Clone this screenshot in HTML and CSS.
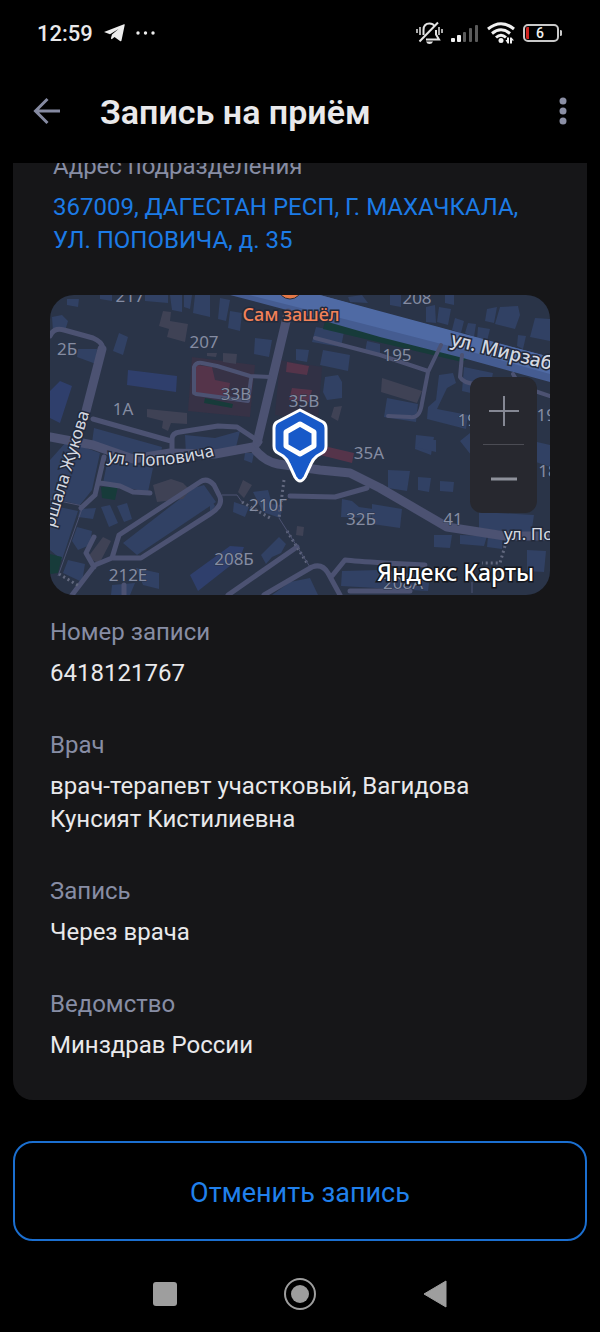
FILE: index.html
```html
<!DOCTYPE html>
<html lang="ru">
<head>
<meta charset="utf-8">
<meta name="viewport" content="width=device-width, initial-scale=1">
<title>Запись на приём</title>
<link rel="stylesheet" href="styles.css">
</head>
<body>
<div class="screen">
  <div class="status">
    <div class="status-left">
      <span class="clock">12:59</span>
      <svg width="21" height="18" viewBox="0 0 21 18" aria-hidden="true"><path d="M0 8 20 0.3Q21 0 20.7 1L17.5 16.5Q17.2 17.8 16 17L10.5 13 8 15Q7 15.500 7 14L8 10.500 14.500 5 6 10.300Z" fill="#eee"/></svg>
      <svg width="20" height="4" viewBox="0 0 20 4" aria-hidden="true"><g fill="#eee"><circle cx="2" cy="2" r="1.700"/><circle cx="9.500" cy="2" r="1.700"/><circle cx="17" cy="2" r="1.700"/></g></svg>
    </div>
    <div class="status-right">
      <svg width="27" height="24" viewBox="0 0 27 24" aria-hidden="true"><g fill="none" stroke="#e4e4e4" stroke-width="2"><path d="M7.500 14V9Q7.500 2.500 13.500 2.500 17 2.500 18.500 5M20 9V13.500L23 18.500H10"/><path d="M3.500 20.500 22 1.500"/><path d="M1 8V12M4 6V14M23 6V14M26 8V12" stroke-width="1.500"/></g><path d="M10 20.500H17Q16 23 13.500 23T10 20.500Z" fill="#e4e4e4"/></svg>
      <svg width="28" height="19" viewBox="0 0 28 19" aria-hidden="true"><g fill="#f0f0f0"><rect y="14" width="4" height="4" rx="1"/><rect x="6" y="11" width="4" height="7" rx="1"/></g><g fill="#5b5b5b"><rect x="12" y="8" width="3" height="10" rx="1"/><rect x="18" y="4" width="3" height="14" rx="1"/><rect x="24" y="1" width="3" height="17" rx="1"/></g></svg>
      <svg width="28" height="22" viewBox="0 0 28 22" aria-hidden="true"><g fill="none" stroke="#f0f0f0" stroke-width="3"><path d="M1 7Q14-3.500 27 7"/><path d="M5 11.500Q14 4 23 11.500"/><path d="M9 15.500Q14 11 19 15.500"/></g><circle cx="14" cy="18.500" r="2.500" fill="#f0f0f0"/><path d="M18.500 18H20V15.500H22V21.500H20.500ZM27 18.500H25V21.500H23V15.500H24.500Z" fill="#f0f0f0"/></svg>
      <svg class="battery" width="40" height="20" viewBox="0 0 40 20" role="img" aria-label="6"><rect x="1" y="2" width="34" height="16" rx="4" fill="none" stroke="#c9c9c9" stroke-width="2"/><path d="M6 4V16H4Q3 16 3 14V6Q3 4 4 4Z" fill="#cf2420"/><path d="M37 7Q39 7 39 8V12Q39 13 37 13Z" fill="#c9c9c9"/><text x="17" y="15" class="battery-level">6</text></svg>
    </div>
  </div>

  <header class="appbar">
    <button class="icon-button" aria-label="Назад"><svg width="28" height="28" viewBox="0 0 28 28"><path d="M27 14H3M14.500 2 2.500 14 14.500 26" fill="none" stroke="#858aa1" stroke-width="3"/></svg></button>
    <h1>Запись на приём</h1>
    <button class="icon-button" aria-label="Меню"><svg width="8" height="28" viewBox="0 0 8 28"><g fill="#8b8fa5"><circle cx="4" cy="4" r="3.500"/><circle cx="4" cy="14" r="3.500"/><circle cx="4" cy="24" r="3.500"/></g></svg></button>
  </header>

  <main class="scroller">
    <section class="card">
      <div class="field address">
        <div class="label">Адрес подразделения</div>
        <a class="value" href="#map">367009, ДАГЕСТАН РЕСП, Г. МАХАЧКАЛА, УЛ. ПОПОВИЧА, д. 35</a>
      </div>

      <div class="map" id="map">
        <svg class="map-canvas" viewBox="0 0 500 300" preserveAspectRatio="xMidYMid slice">
          <defs><path id="popovicha" d="M57 166Q100 178 168 160"/></defs>
          <rect width="500" height="300" fill="#2a3448"/>
          <g opacity=".5"><path d="M142 62 205 70 200 122 138 116Z" fill="#443044"/><path d="M230 65 272 72 268 124 225 120Z" fill="#392f43"/></g>
          <g fill="#314164">
            <path d="M2 22 12 20 18 26 15 36 3 36ZM17 4 29 4 28 12 17 10ZM50 0H62V6L50 4ZM95 0H118V8L95 6ZM120 0H132V17L122 15ZM134 0H142L140 14 134 12ZM145 0H160V22L143 18Z"/>
            <path d="M69 38 78 42 73 60 63 56ZM28 54 47 54 46 69 27 62ZM170 3 180 5 176 26 168 24ZM180 16 192 18 190 36 178 33ZM205 43 222 45 219 62 204 59ZM246 54 259 55 257 67 246 65Z"/>
            <path d="M266 32 294 37 291 52 262 47ZM273 55 300 60 298 76 270 70ZM275 82 288 80 292 87 292 103 277 105 273 97ZM317 46 330 49V61L315 57ZM298 2 312 0 318 8 300 7Z"/>
            <path d="M376 12 385 10 386 28 376 27ZM389 12 401 14 398 30 387 27ZM405 23 414 26 411 38 402 35ZM418 28 426 29 424 42 415 38ZM428 32 440 34 437 46 427 44ZM437 14 447 12 444 28 435 26ZM450 12 468 11 470 20 465 34 445 29ZM485 23 500 24V46L480 42ZM468 40 476 41 473 54 467 51ZM340 0H351V12L340 10ZM395 0H404V10L395 8Z"/>
            <path d="M389 80 403 78 406 88 397 93 387 114 418 120 416 134 377 124 378 112 386 105ZM337 103 368 109 366 127 334 122ZM366 140 384 142 381 160 365 154ZM414 72 443 78 438 102 412 96Z"/>
            <path d="M44 133 112 152 110 165 94 165 42 148ZM135 140 165 143 190 136 185 156 136 160ZM17 146 50 158 42 195 30 210 10 205 0 235V165ZM58 163 103 173 98 197 53 188ZM0 210 28 216 12 265 0 255Z"/>
            <path d="M51 212 60 210 68 228 59 232ZM67 211 77 208 82 224 74 227ZM30 214 46 213 43 224 28 222ZM27 232 42 236 40 250 28 255 22 246ZM18 265 35 269 32 287 13 278ZM86 273 109 278V294L93 290ZM62 290 85 288 80 300H61Z"/>
            <path d="M73 248 144 193 154 190 166 207 87 260ZM160 203 165 211 160 219ZM195 158 204 158 202 168 194 165ZM184 207 199 212 195 222 183 217ZM203 197 218 195 222 209 233 211 230 223 213 217ZM292 204 302 206 309 212 323 214 321 223 291 222ZM332 217 347 219 345 232 331 230ZM372 145H386V157L365 152ZM338 175 360 176 357 196 338 193ZM368 182 381 183 379 197 368 195ZM390 186 404 187 403 197 390 196ZM322 209 352 214 350 233 322 229ZM384 240 402 240 400 253 384 252ZM410 240 437 241 434 251 410 249ZM438 241 453 242 452 254 437 252ZM429 217 484 220 481 240 429 233ZM477 255 496 256 494 277 477 276Z"/>
            <path d="M211 260 229 242 236 249 231 258 222 262 216 269ZM292 276 330 275 380 281 378 296 291 291ZM240 287 260 283 268 300H222ZM457 140 500 150V172L458 157ZM410 146 420 138 421 160Z"/>
          </g>
          <g fill="#2f3f6c"><path d="M78 75 127 81 126 97 77 90ZM10 86 22 91 10 128 0 123V96ZM140 280 180 251 194 252 190 263 148 296Z"/></g>
          <g fill="#3f4255"><path d="M113 16 121 17 120 26 138 29 135 47 117 42 119 34 109 31ZM97 114 137 118V129L121 128 118 136 112 133 113 126 97 122ZM157 58 167 58 166 62 157 61ZM284 112 292 111 288 126 281 122ZM103 190 121 184 133 188 140 195 133 204 107 207ZM53 242 61 246 49 269 38 262ZM332 83 372 96 367 108 331 97ZM173 58 187 59 186 69 173 67ZM193 185 202 190 194 203 188 197ZM247 231 254 232 253 241 246 240Z"/></g>
          <g fill="#55344a"><path d="M146 70 162 72 165 85 180 88 177 104 145 100ZM237 67 259 71 257 80 236 77ZM242 93 262 95 259 107 239 105ZM274 151 304 158 302 168 270 160Z"/></g>
          <g fill="#173b3a"><path d="M51 192 68 191 65 205 52 203ZM0 259 12 262 8 278 0 279ZM155 103 183 109 182 113 154 108ZM275 26 332 41 420 62 412 67 273 34Z"/></g>
          <path d="M180 0H270L330 17 500 62V87L413 63 330 42 233 14Z" fill="#455c91"/>
          <path d="M199 0H270L500 62V79L415 55 310 28Z" fill="#4f6aa4"/>
          <g fill="none" stroke="#4c5272" stroke-linejoin="round" stroke-linecap="round">
            <path d="M0 41Q4 32 14 35L43 43Q54 48 52 54" stroke-width="5"/>
            <path d="M52 54 36 116M0 142 43 150 83 164 120 158 165 159 203 152Q213 166 228 169L270 175 300 178 330 193 397 232 455 241H500" stroke-width="9"/>
            <path d="M238 18 207 148" stroke-width="9"/>
            <path d="M43 124 121 146M122 155V144Q122 138 130 137L168 131 187 132 210 147M54 162 45 200M50 188 70 191 83 197 100 198M45 200 31 213" stroke-width="5"/>
            <path d="M22 300 45 270 62 263 69 240 150 187Q157 182 164 190L170 202Q173 211 160 219L91 263 62 263M44 272 36 258 44 242M74 290V300" stroke-width="5"/>
            <path d="M144 98V72Q146 67 152 68L167 71 200 81 220 82M146 99 198 106 201 84M265 43 330 60 378 76M391 50 378 77 372 108Q370 124 360 122L338 121M412 60 410 82Q413 88 426 89M463 79 470 91 500 101" stroke-width="4"/>
            <path d="M240 201 285 202 317 193M178 300 247 252M214 300 262 272Q272 268 278 278L290 300M282 281 295 265Q304 266 335 268L375 270M300 296H360" stroke-width="5"/>
          </g>
          <g fill="none" stroke="#62687e" stroke-width="3" stroke-dasharray="2 3"><path d="M234 185 229 223M237 236 257 268M9 279 29 291M192 207 220 223M455 251 450 268 432 268"/></g>
          <g fill="none" stroke="#4c5272" stroke-width="1"><path d="M172 200 187 200 192 207M229 223 260 272M0 204 33 211 8 281M422 287 422 298"/></g>
          <g class="house">
            <text x="80" y="7">217</text><text x="367" y="9">208</text><text x="17" y="60">2Б</text><text x="154" y="53">207</text><text x="347" y="66">195</text><text x="186" y="105">33В</text><text x="254" y="112">35В</text><text x="73" y="120">1А</text><text x="319" y="164">35А</text><text x="218" y="216">210Г</text><text x="311" y="230">32Б</text><text x="403" y="230">41</text><text x="184" y="270">208Б</text><text x="78" y="286">212Е</text><text x="353" y="294">208А</text><text x="422" y="131">195</text><text x="501" y="126">195</text><text x="498" y="182">18</text>
          </g>
          <circle cx="240" cy="-8" r="12" fill="#e47847" stroke="#2a2d3b"/>
          <text class="poi" x="241" y="26">Сам зашёл</text>
          <text class="street major" x="400" y="50" transform="rotate(14 400 50)">ул. Мирзабекова</text>
          <text class="street"><textPath href="#popovicha">ул. Поповича</textPath></text>
          <text class="street" x="454" y="245">ул. Поповича</text>
          <text class="street" x="4" y="233" transform="rotate(-73 4 233)">ршала Жукова</text>
          <path d="M250 115 273 127Q276 129 276 133V151Q276 156 272 158L267 161Q263 164 261 169L255 182Q250 190 245 182L239 169Q237 164 233 161L228 158Q224 156 224 151V133Q224 129 227 127Z" fill="#1859c8" stroke="#fff" stroke-width="3" stroke-linejoin="round"/>
          <path d="M250 129 264 137V151L250 159 236 151V137Z" fill="#1859c8" stroke="#fff" stroke-width="5" stroke-linejoin="round"/>
          <text class="brand" x="484" y="286">Яндекс Карты</text>
        </svg>
        <div class="zoom">
          <button aria-label="Приблизить"><svg width="32" height="32" viewBox="0 0 32 32"><path d="M16 1V31M1 16H31" stroke="#858894" stroke-width="2"/></svg></button>
          <button aria-label="Отдалить"><svg width="32" height="32" viewBox="0 0 32 32"><path d="M3 16H29" stroke="#8e919b" stroke-width="3"/></svg></button>
        </div>
      </div>

      <dl class="details">
        <div class="field"><dt class="label">Номер записи</dt><dd class="value">6418121767</dd></div>
        <div class="field"><dt class="label">Врач</dt><dd class="value">врач-терапевт участковый, Вагидова Кунсият Кистилиевна</dd></div>
        <div class="field"><dt class="label">Запись</dt><dd class="value">Через врача</dd></div>
        <div class="field"><dt class="label">Ведомство</dt><dd class="value">Минздрав России</dd></div>
      </dl>
    </section>
  </main>

  <button class="cancel">Отменить запись</button>

  <nav class="system-nav">
    <button aria-label="Недавние"><svg width="34" height="34" viewBox="0 0 34 34"><rect x="5" y="5" width="24" height="24" rx="3" fill="#9e9e9e"/></svg></button>
    <button aria-label="Домой"><svg width="34" height="34" viewBox="0 0 34 34"><circle cx="17" cy="17" r="15" fill="none" stroke="#9e9e9e" stroke-width="2"/><circle cx="17" cy="17" r="9" fill="#9e9e9e"/></svg></button>
    <button aria-label="Назад"><svg width="34" height="34" viewBox="0 0 34 34"><path d="M6 17 28 4V30Z" fill="#9e9e9e" stroke="#9e9e9e" stroke-linejoin="round"/></svg></button>
  </nav>
</div>
</body>
</html>
```

FILE: styles.css
```css
* {
  box-sizing: border-box;
}

body {
  margin: 0;
  background: #000;
  color: #e9e9eb;
  font-family: Roboto, "Noto Sans", sans-serif;
  font-size: 24px;
}

button {
  padding: 0;
  border: 0;
  background: none;
  color: inherit;
  font: inherit;
}

svg {
  display: block;
}

.screen {
  display: flex;
  flex-direction: column;
  min-height: 100vh;
}

.status {
  display: flex;
  align-items: center;
  justify-content: space-between;
  height: 66px;
  padding: 0 37px;
}

.status-left,
.status-right {
  display: flex;
  align-items: center;
  gap: 8px;
}

.status-left {
  gap: 11px;
}

.clock {
  font-size: 22px;
  font-weight: 500;
}

.battery-level {
  fill: #f0f0f0;
  font-size: 14px;
  font-weight: 500;
  text-anchor: middle;
}

.appbar {
  display: flex;
  align-items: center;
  height: 97px;
  padding: 0 33px 8px;
}

.appbar h1 {
  flex: 1;
  margin: 2px 0 0 39px;
  font-size: 34px;
  font-weight: 600;
  line-height: 40px;
}

.icon-button {
  display: flex;
}

.scroller {
  overflow: hidden;
  padding: 0 13px;
}

.card {
  margin-top: -13px;
  padding: 0 37px 38px;
  border-radius: 0 0 20px 20px;
  background: #161618;
}

.label {
  color: #878da4;
  line-height: 32px;
}

.value {
  display: block;
  margin: 9px 0 0;
  line-height: 33px;
}

.address {
  padding-left: 3px;
}

.address .value {
  color: #1c7be6;
  text-decoration: none;
}

.map {
  position: relative;
  margin: 38px 0 21px;
  overflow: hidden;
  border-radius: 24px;
}

.map-canvas {
  width: 100%;
  height: 300px;
  font-family: "Noto Sans", sans-serif;
}

.house {
  fill: #858ca2;
  font-size: 17px;
  text-anchor: middle;
}

.house text {
  paint-order: stroke;
  stroke: #2a3448;
  stroke-width: 1px;
}

.poi,
.street,
.brand {
  paint-order: stroke;
  stroke: #232a3b;
  stroke-width: 3px;
}

.poi {
  fill: #f38258;
  font-size: 18px;
  font-weight: 500;
  text-anchor: middle;
}

.street {
  fill: #d5d9e2;
  font-size: 17px;
}

.major {
  font-size: 19px;
  font-weight: 500;
}

.brand {
  fill: #fff;
  stroke: #15171d;
  font-size: 23px;
  font-weight: 500;
  text-anchor: end;
}

.zoom {
  position: absolute;
  top: 82px;
  right: 13px;
  display: flex;
  flex-direction: column;
  width: 67px;
  border-radius: 12px;
  background: #27282f;
}

.zoom button {
  display: flex;
  align-items: center;
  justify-content: center;
  height: 68px;
}

.zoom button + button::before {
  content: "";
  position: absolute;
  top: 67px;
  left: 13px;
  right: 13px;
  height: 1px;
  background: #4b4c54;
}

.details {
  display: flex;
  flex-direction: column;
  gap: 39px;
  margin: 0;
}

.cancel {
  height: 100px;
  margin: 41px 13px 0;
  padding-top: 3px;
  border: 2px solid #1b6fd0;
  border-radius: 20px;
  color: #2080ec;
  font-size: 27px;
}

.system-nav {
  display: flex;
  justify-content: center;
  gap: 101px;
  padding: 36px 0 20px;
}
```
